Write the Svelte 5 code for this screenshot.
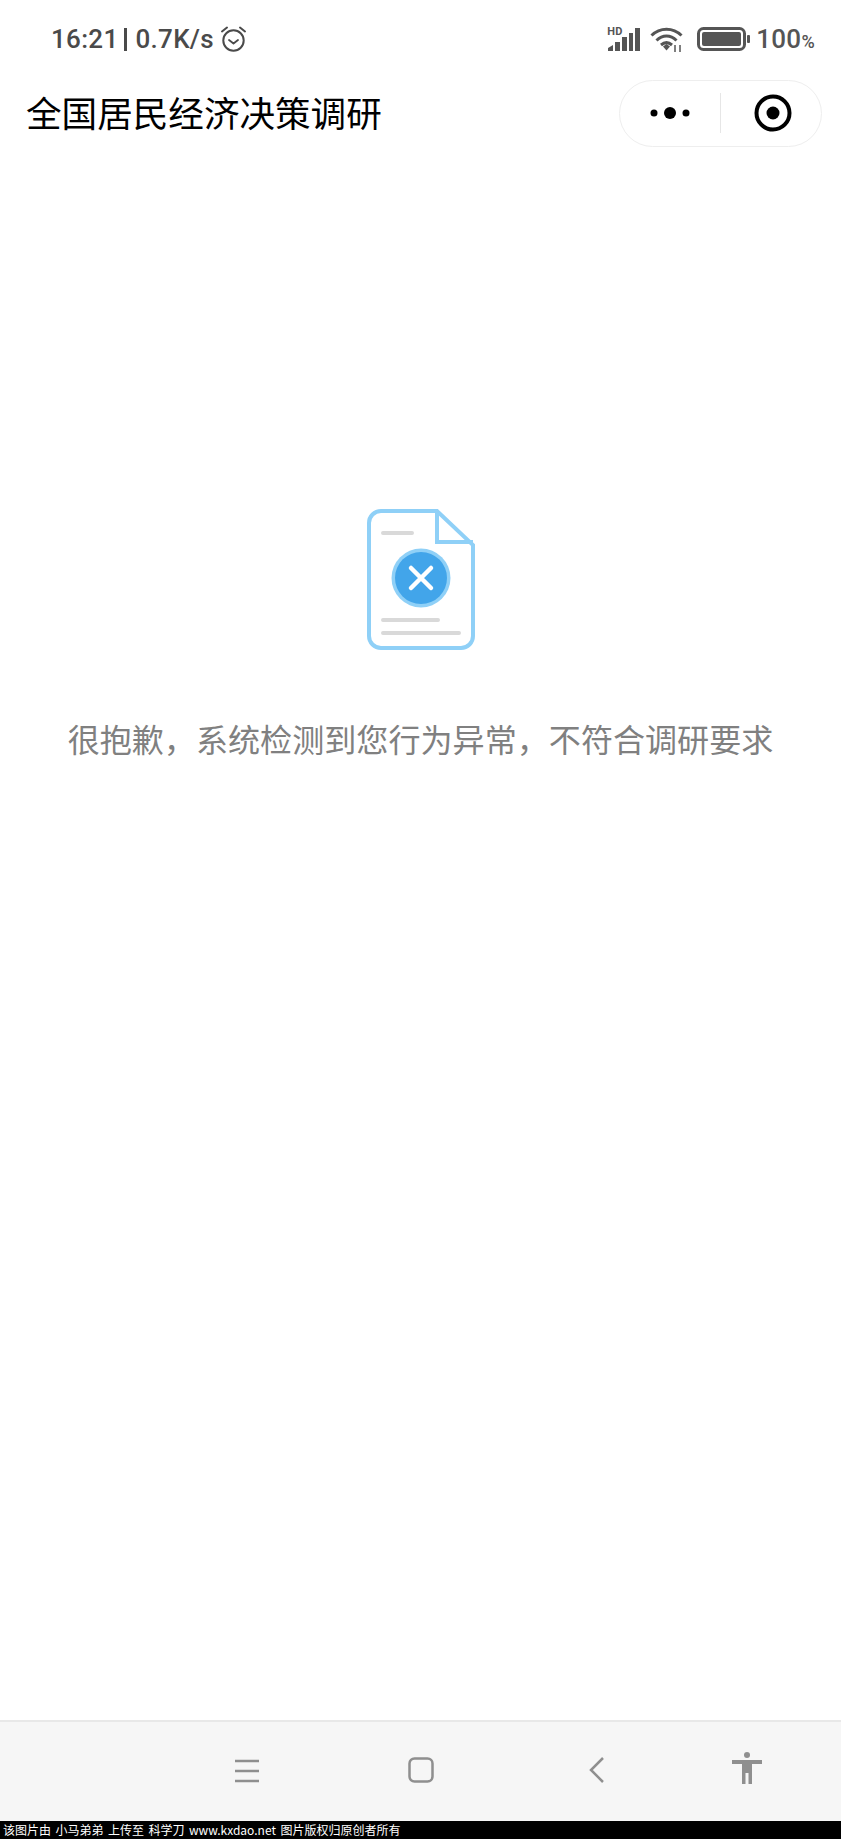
<script lang="ts">
	const message = '很抱歉，系统检测到您行为异常，不符合调研要求';
</script>

<div class="screen">
	<!-- Status bar -->
	<div class="status-bar">
		<div class="status-left">
			<span class="clock">16:21</span>
			<span class="pipe"></span>
			<span class="speed">0.7K/s</span>
			<svg class="alarm" width="27" height="28" viewBox="0 0 27 28" fill="none" stroke="#4a4a4a">
				<circle cx="13.5" cy="15.5" r="10.2" stroke-width="2" />
				<path d="M9 15l4.5 3.5L18 15" stroke-width="1.8" stroke-linecap="round" stroke-linejoin="round" />
				<path d="M2 6.5L7 2.5M25 6.5L20 2.5" stroke-width="2" stroke-linecap="round" />
			</svg>
		</div>
		<div class="status-right">
			<div class="signal">
				<span class="hd">HD</span>
				<svg width="33" height="23" viewBox="0 0 33 23" fill="#555">
					<path d="M1 23v-3l5-3v6zM8 23v-9h5v9zM15 23V9h5v14zM22 23V5h4v18zM28 23V0h5v23z" />
				</svg>
			</div>
			<svg class="wifi" width="35" height="27" viewBox="0 0 35 27" fill="none" stroke="#555" stroke-width="3">
				<path d="M1.500 9.500C10 1 23 1 31.500 9.500" />
				<path d="M6.500 14.500C12.500 8.500 20.500 8.500 26.500 14.500" />
				<path d="M11 19c3.500-3 7.500-3 11 0" />
				<path d="M13 20.500l3.500-2.500 3.500 2.500-3.500 4z" fill="#555" stroke="none" />
				<path d="M25 19v7M30 19v7" stroke-width="1.500" />
			</svg>
			<svg class="battery" width="54" height="24" viewBox="0 0 54 24">
				<rect x="1.500" y="1.500" width="46" height="21" rx="5" fill="none" stroke="#555" stroke-width="3" />
				<rect x="5" y="5" width="39" height="14" rx="2" fill="#555" />
				<rect x="50" y="8" width="3" height="8" rx="1" fill="#555" />
			</svg>
			<span class="level">100<small>%</small></span>
		</div>
	</div>

	<!-- Title bar -->
	<header class="title-bar">
		<h1>全国居民经济决策调研</h1>
		<div class="capsule">
			<div class="capsule-half">
				<svg width="40" height="14" viewBox="0 0 40 14" fill="#000">
					<circle cx="4" cy="7" r="3.500" />
					<circle cx="20" cy="7" r="6" />
					<circle cx="36" cy="7" r="3.500" />
				</svg>
			</div>
			<span class="capsule-line"></span>
			<div class="capsule-half">
				<svg class="target" width="38" height="38" viewBox="0 0 38 38">
					<circle cx="19" cy="19" r="16.500" fill="none" stroke="#000" stroke-width="4" />
					<circle cx="19" cy="19" r="6.500" fill="#000" />
				</svg>
			</div>
		</div>
	</header>

	<!-- Error content -->
	<main class="content">
		<svg class="doc" width="108" height="142" viewBox="0 0 108 142" fill="none">
			<path d="M14 2H70L106 36V127a12 12 0 0 1-12 12H14A12 12 0 0 1 2 127V14A12 12 0 0 1 14 2Z" fill="#fff" stroke="#8fd0f7" stroke-width="4" />
			<path d="M70 2V33H106" stroke="#8fd0f7" stroke-width="4" />
			<path d="M16 24H45M16 111H71M16 124H92" stroke="#d9d9d9" stroke-width="4" stroke-linecap="round" />
			<circle cx="54" cy="69" r="29.500" fill="#8fd0f7" />
			<circle cx="54" cy="69" r="26" fill="#42a5ea" />
			<path d="M44 59L64 79M64 59L44 79" stroke="#fff" stroke-width="4.500" stroke-linecap="round" />
		</svg>
		<p class="message">{message}</p>
	</main>

	<!-- Navigation bar -->
	<nav class="nav-bar">
		<svg class="nav-menu" width="24" height="24" viewBox="0 0 24 24" stroke="#8f8f8f" stroke-width="2.500">
			<path d="M0 2H24M0 12H24M0 22H24" />
		</svg>
		<svg class="nav-home" width="26" height="26" viewBox="0 0 26 26" fill="none" stroke="#8f8f8f" stroke-width="2.500">
			<rect x="1.500" y="1.500" width="23" height="23" rx="5" />
		</svg>
		<svg class="nav-back" width="16" height="26" viewBox="0 0 16 26" fill="none" stroke="#8f8f8f" stroke-width="2.500">
			<path d="M14 1L2 13L14 25" />
		</svg>
		<svg class="nav-person" width="30" height="32" viewBox="0 0 30 32" fill="#8f8f8f">
			<circle cx="15" cy="3" r="3" />
			<path d="M0 8H30V12H20V32H16.500V21H13.500V32H10V12H0Z" />
		</svg>
	</nav>

	<footer class="watermark">该图片由 小马弟弟 上传至 科学刀 www.kxdao.net 图片版权归原创者所有</footer>
</div>

<style>
	:global(body) {
		background: #fff;
	}

	.screen {
		display: flex;
		flex-direction: column;
		height: 1839px;
		font-family: "Noto Sans CJK SC", "Noto Sans", sans-serif;
		background: #fff;
		overflow: hidden;
	}

	.status-bar {
		display: flex;
		justify-content: space-between;
		align-items: center;
		height: 78px;
		padding: 0 26px 0 51px;
		box-sizing: border-box;
		color: #4a4a4a;
		font-family: Roboto, sans-serif;
		font-size: 26px;
		font-weight: 500;
		letter-spacing: 0.3px;
	}

	.status-left,
	.status-right {
		display: flex;
		align-items: center;
	}

	.pipe {
		width: 3px;
		height: 23px;
		margin: 0 8px 0 6px;
		background: #4a4a4a;
	}

	.alarm {
		margin-left: 6px;
	}

	.signal {
		position: relative;
		width: 33px;
		height: 23px;
		margin-right: 10px;
	}

	.hd {
		position: absolute;
		left: 0;
		top: -2px;
		font-size: 11px;
		font-weight: 700;
		line-height: 11px;
		color: #555;
	}

	.signal svg {
		display: block;
	}

	.wifi {
		margin-right: 12px;
	}

	.battery {
		margin-right: 5px;
	}

	.level {
		color: #555;
		letter-spacing: 0.3px;
	}

	.level small {
		font-size: 18px;
	}

	.title-bar {
		display: flex;
		justify-content: space-between;
		align-items: center;
		height: 70px;
		padding: 0 19px 0 26px;
	}

	h1 {
		margin: -3px 0 0;
		font-size: 35.600px;
		font-weight: 400;
		color: #000;
		white-space: nowrap;
	}

	.capsule {
		display: flex;
		align-items: center;
		width: 203px;
		height: 67px;
		box-sizing: border-box;
		border: 1px solid #eeeeee;
		border-radius: 34px;
	}

	.capsule-half {
		flex: 1;
		display: flex;
		justify-content: center;
		align-items: center;
	}

	.target {
		margin-left: 4px;
	}

	.capsule-line {
		width: 1px;
		height: 40px;
		background: #e6e6e6;
	}

	.content {
		flex: 1;
		display: flex;
		flex-direction: column;
		align-items: center;
		padding-top: 361px;
	}

	.doc {
		display: block;
		margin-left: 1px;
	}

	.message {
		margin: 64px 0 0;
		font-size: 32.100px;
		line-height: 46px;
		color: #808080;
		white-space: nowrap;
	}

	.nav-bar {
		position: relative;
		height: 101px;
		box-sizing: border-box;
		border-top: 2px solid #e8e8e8;
		background: #f6f6f6;
	}

	.nav-bar svg {
		position: absolute;
	}

	.nav-menu {
		left: 235px;
		top: 37px;
	}

	.nav-home {
		left: 408px;
		top: 35px;
	}

	.nav-back {
		left: 589px;
		top: 35px;
	}

	.nav-person {
		left: 732px;
		top: 30px;
	}

	.watermark {
		height: 18px;
		padding-left: 3px;
		background: #000;
		color: #fff;
		font-size: 12px;
		line-height: 18px;
		word-spacing: 1.800px;
		white-space: nowrap;
	}
</style>
